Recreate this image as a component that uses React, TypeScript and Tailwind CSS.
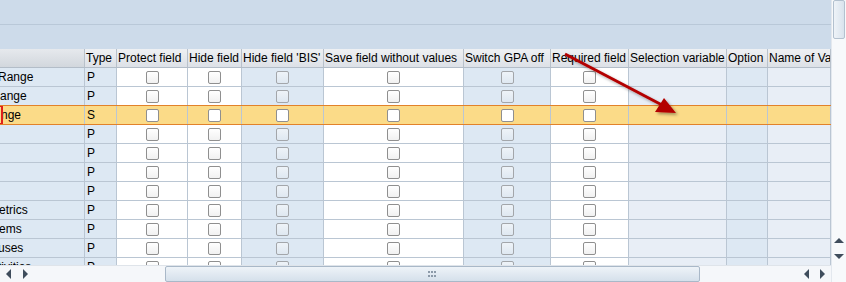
import React from 'react';

// Columns of the field-settings grid (widths include the 1px right border)
const COLS = [
  { key: 'name', title: '', w: 'w-[85px]', tone: 'blue' },
  { key: 'type', title: 'Type', w: 'w-[32px]', tone: 'blue' },
  { key: 'protect', title: 'Protect field', w: 'w-[71px]', tone: 'white', box: true },
  { key: 'hide', title: 'Hide field', w: 'w-[54px]', tone: 'white', box: true },
  { key: 'bis', title: "Hide field 'BIS'", w: 'w-[82px]', tone: 'blue', box: true },
  { key: 'save', title: 'Save field without values', w: 'w-[140px]', tone: 'white', box: true },
  { key: 'gpa', title: 'Switch GPA off', w: 'w-[87px]', tone: 'blue', box: true },
  { key: 'req', title: 'Required field', w: 'w-[78px]', tone: 'white', box: true },
  { key: 'selvar', title: 'Selection variable', w: 'w-[98px]', tone: 'pale' },
  { key: 'option', title: 'Option', w: 'w-[41px]', tone: 'blue' },
  { key: 'nameva', title: 'Name of Variable', w: 'w-[63px]', tone: 'pale' },
];

const ROWS = [
  { name: 'Range', type: 'P', shift: '-ml-[4px]' },
  { name: 'ange', type: 'P', shift: '-ml-[2px]' },
  { name: 'nge', type: 'S', shift: '-ml-[1px]', active: true },
  { name: '', type: 'P', shift: '' },
  { name: '', type: 'P', shift: '' },
  { name: '', type: 'P', shift: '' },
  { name: '', type: 'P', shift: '' },
  { name: 'etrics', type: 'P', shift: '-ml-[3px]' },
  { name: 'ems', type: 'P', shift: '-ml-[3px]' },
  { name: 'uses', type: 'P', shift: '-ml-[4px]' },
  { name: 'tivities', type: 'P', shift: '-ml-[4px]' },
];

const toneBg: Record<string, string> = {
  blue: 'bg-[#dde8f3]',
  white: 'bg-white',
  pale: 'bg-[#e8eef6]',
};

const Checkbox = ({ dim, active }: { dim: boolean; active?: boolean }) => (
  <div
    className={
      'w-[13px] h-[13px] rounded-[2px] border ' +
      (active
        ? 'border-[#8f8f8f] bg-white'
        : dim
        ? 'border-[#a3a6aa] bg-gradient-to-b from-[#eef3f8] to-[#dfe8f1]'
        : 'border-[#8f8f8f] bg-gradient-to-b from-white to-[#f1f1f1]')
    }
  />
);

const Tri = ({ dir }: { dir: 'l' | 'r' | 'u' | 'd' }) => {
  const pts = { l: '5,0 5,10 0,5', r: '0,0 0,10 5,5', u: '0,5 10,5 5,0', d: '0,0 10,0 5,5' }[dir];
  const horiz = dir === 'l' || dir === 'r';
  return (
    <svg width={horiz ? 5 : 10} height={horiz ? 10 : 5} viewBox={horiz ? '0 0 5 10' : '0 0 10 5'}>
      <polygon points={pts} fill="#3f4d5c" />
    </svg>
  );
};

const App: React.FC = () => {
  return (
    <div className="relative w-[846px] h-[282px] overflow-hidden flex bg-white text-[12px] leading-none text-black font-['Liberation_Sans',Arial,sans-serif]">
      <div className="w-[831px] flex flex-col">
        {/* toolbar band */}
        <div className="h-[25px] bg-[#cddbea] border-b border-[#b9c8d8]" />
        <div className="h-[24px] bg-[#cddbea]" />

        {/* header */}
        <div className="flex h-[19px] border-b border-[#b3bdc8]">
          {COLS.map((c, i) => (
            <div
              key={c.key}
              className={
                c.w +
                ' shrink-0 border-r border-[#b8c1cb] overflow-hidden whitespace-nowrap pl-[1px] flex items-center ' +
                (i === 0
                  ? 'bg-gradient-to-b from-[#e6e9ed] to-[#d2d7dd]'
                  : 'bg-gradient-to-b from-[#eef0f3] to-[#dde1e7]')
              }
            >
              {c.title}
            </div>
          ))}
        </div>

        {/* body rows */}
        <div className="flex-1 overflow-hidden">
          {ROWS.map((r, ri) => {
            const nextActive = ROWS[ri + 1]?.active;
            return (
              <div
                key={ri}
                className={
                  'relative flex h-[19px] border-b ' +
                  (r.active || nextActive ? 'border-[#e2822a]' : 'border-[#bac6d3]')
                }
              >
                {COLS.map((c) => (
                  <div
                    key={c.key}
                    className={
                      c.w +
                      ' shrink-0 border-r border-[#bac6d3] overflow-hidden whitespace-nowrap flex items-center ' +
                      (c.box ? 'justify-center ' : 'pl-[2px] ') +
                      (r.active ? 'bg-[#fbdb88]' : toneBg[c.tone])
                    }
                  >
                    {c.box ? (
                      <Checkbox dim={c.tone === 'blue'} active={r.active} />
                    ) : c.key === 'name' ? (
                      <span className={'shrink-0 ' + r.shift}>{r.name}</span>
                    ) : c.key === 'type' ? (
                      r.type
                    ) : null}
                  </div>
                ))}
                {r.active && (
                  <div className="absolute left-0 top-0 w-[3px] h-[18px] border-r-2 border-t border-b border-[#e0201a]" />
                )}
              </div>
            );
          })}
        </div>

        {/* horizontal scrollbar */}
        <div className="h-[17px] flex items-stretch bg-[#f5f7fa] border-t border-[#dfe4ea]">
          <div className="w-[17px] flex items-center justify-center"><Tri dir="l" /></div>
          <div className="w-[17px] flex items-center justify-center"><Tri dir="r" /></div>
          <div className="w-[131px]" />
          <div className="w-[535px] rounded-[2px] border border-[#a9b8c8] bg-gradient-to-b from-[#eef3f8] to-[#d5e0eb] flex items-center justify-center">
            <svg width="9" height="7" viewBox="0 0 9 7">
              {[0, 3, 6].map((x) =>
                [0, 4].map((y) => <rect key={x + '-' + y} x={x} y={y} width="2" height="2" fill="#8c9aa9" />)
              )}
            </svg>
          </div>
          <div className="flex-1" />
          <div className="w-[16px] flex items-center justify-center"><Tri dir="l" /></div>
          <div className="w-[17px] flex items-center justify-center"><Tri dir="r" /></div>
        </div>
      </div>

      {/* vertical scrollbar */}
      <div className="w-[15px] flex flex-col bg-[#f7f9fb] border-l border-[#e3e8ee]">
        <div className="h-[39px] mx-[1px] rounded-[2px] border border-[#b3c1cf] bg-gradient-to-r from-[#eef3f8] to-[#d9e3ed]" />
        <div className="flex-1" />
        <div className="h-[16px] flex items-center justify-center"><Tri dir="u" /></div>
        <div className="h-[16px] flex items-center justify-center"><Tri dir="d" /></div>
        <div className="h-[18px]" />
      </div>

      {/* annotation arrow drawn over the grid */}
      <svg className="absolute left-0 top-0 pointer-events-none" width="846" height="282">
        <defs>
          <filter id="sh" x="-20%" y="-20%" width="140%" height="140%">
            <feDropShadow dx="2" dy="2" stdDeviation="1.5" floodColor="#000" floodOpacity="0.35" />
          </filter>
        </defs>
        <g filter="url(#sh)">
          <line x1="565" y1="54" x2="662" y2="105" stroke="#b30000" strokeWidth="3" />
          <polygon points="676,113 655,112 664,98" fill="#b30000" />
        </g>
      </svg>
    </div>
  );
};

export default App;
